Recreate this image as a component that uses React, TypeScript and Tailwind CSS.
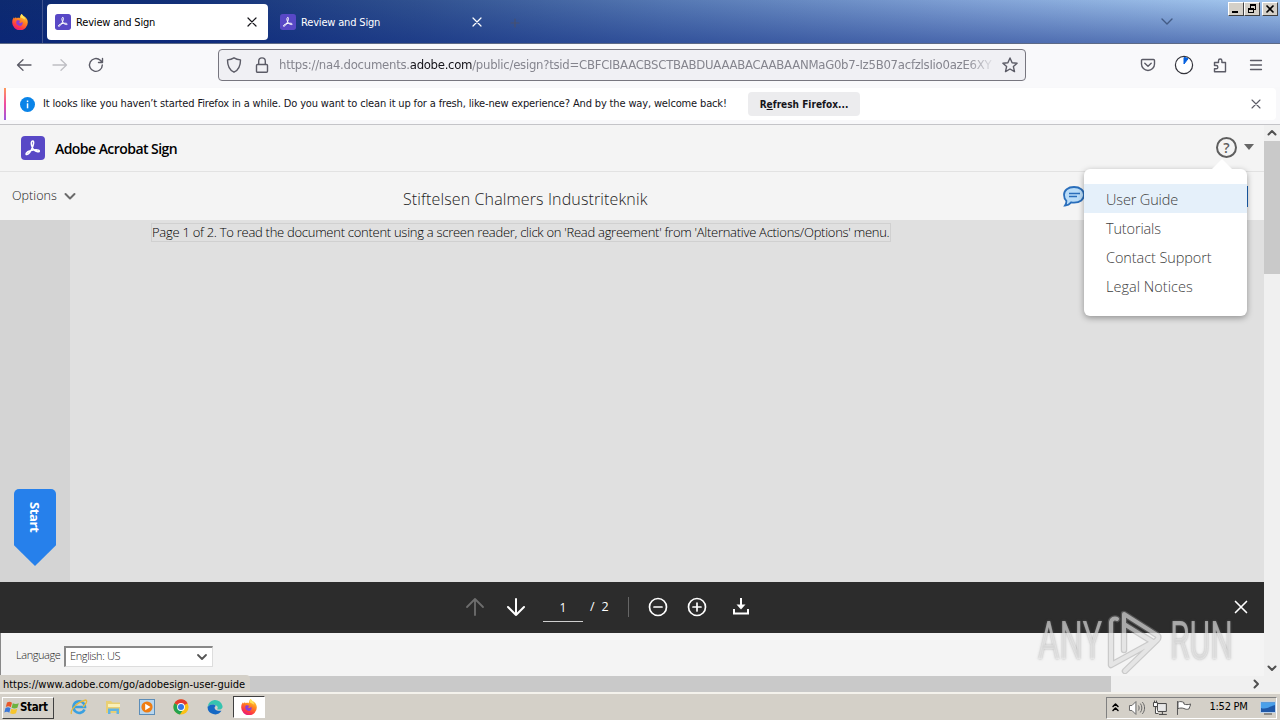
import type { ReactNode } from "react";

const UI = "font-['DejaVu_Sans_Condensed','DejaVu_Sans',sans-serif]";
const DOC = "font-['Open_Sans',sans-serif] font-light";

function AcrobatIcon({ className }: { className: string }) {
  return (
    <svg viewBox="0 0 24 24" className={className}>
      <rect width="24" height="24" rx="4" fill="#5848c6" />
      <path
        d="M11.200 5.200c1.800-.9 1.900 1.900.5 5.600-1.300 3.400-3.900 7.400-5.800 7.700-1.800.1-.8-2.500 3.300-3.700 3.900-1.300 8.700-1.400 9.100.1.300 1.700-3.200 1-5.400-1-2.300-2.300-3.500-7.600-1.700-8.700z"
        fill="none"
        stroke="#fff"
        strokeWidth="1.500"
        strokeLinejoin="round"
      />
    </svg>
  );
}

function FirefoxIcon({ className }: { className: string }) {
  return (
    <svg viewBox="0 0 16 16" className={className}>
      <defs>
        <linearGradient id="fx" x1="0.8" y1="0" x2="0.3" y2="1">
          <stop offset="0" stopColor="#ffe14a" />
          <stop offset="0.4" stopColor="#ff8a1e" />
          <stop offset="0.75" stopColor="#ff3d3f" />
          <stop offset="1" stopColor="#e31587" />
        </linearGradient>
      </defs>
      <path d="M9.600 0c1 1.200 1.600 2 2 2.600l1-.1c1.900 1.400 3.300 3.600 3.200 6A7.800 7.800 0 0 1 .2 8.500C.2 6 1 4.300 2 3.300l.4 1.200C3 3.700 3.500 3.400 4 3.200l.6 1.100C6 3.600 7 3.800 7.800 4.200 7.900 2.500 8.600 1 9.600 0z" fill="url(#fx)" />
      <path d="M5 6.300c1.500-.3 2 .5 3.400.5-.1.900-1.400 1-1.600 1.800 1 .8 2.700.1 3.500-.9.900 2.300-.4 4.300-2.500 4.300-2.200 0-3.900-1.800-3.600-3.900.1-.8.400-1.400.8-1.800z" fill="#8a3fd6" />
      <path d="M9.600 0c1 1.200 3.400 3 3.500 5.500-1-.8-4-1.500-4.600-2.500C8.600 1.700 9 .8 9.600 0z" fill="#ffe45a" />
    </svg>
  );
}

function Stroke({ d, className, width = 1.3, box = 16, fill = "none" }: { d: string; className: string; width?: number; box?: number; fill?: string }) {
  return (
    <svg viewBox={`0 0 ${box} ${box}`} className={`shrink-0 ${className}`} fill={fill} stroke="currentColor" strokeWidth={width} strokeLinecap="round" strokeLinejoin="round">
      <path d={d} />
    </svg>
  );
}

const CROSS = "M4 4l8 8M12 4l-8 8";

function WinButton({ children }: { children: ReactNode }) {
  return (
    <div className="flex h-[14px] w-4 items-center justify-center border border-t-white border-r-[#404040] border-b-[#404040] border-l-white bg-[#d4d0c8]">
      {children}
    </div>
  );
}

function TabStrip() {
  return (
    <div className="flex h-11 shrink-0 items-start border-b border-[#5d6a86] bg-[linear-gradient(to_bottom,transparent,rgba(8,35,125,0.45)),linear-gradient(to_right,#0d2a70_0%,#123078_14%,#2f508f_32%,#5578b3_52%,#7fa0d4_75%,#a6caf0_100%)]">
      <div className="flex h-[43px] w-[43px] items-center justify-center border-r border-[#40548f]">
        <FirefoxIcon className="mr-[3px] h-4 w-4" />
      </div>
      <div className="mt-1 ml-1 flex h-9 w-[221px] items-center rounded bg-white pl-2">
        <AcrobatIcon className="h-4 w-4" />
        <span className="mt-[3px] ml-[5px] flex-1 text-[11px] tracking-[-0.17px] text-black">Review and Sign</span>
        <Stroke d={CROSS} className="mr-2 h-4 w-4 text-[#15141a]" width={1.2} />
      </div>
      <div className="mt-1 flex h-9 w-[221px] items-center pl-3">
        <AcrobatIcon className="h-4 w-4" />
        <span className="mt-[3px] ml-[5px] flex-1 text-[11px] tracking-[-0.17px] text-white">Review and Sign</span>
        <Stroke d={CROSS} className="mr-1 h-4 w-4 text-white" width={1.2} />
      </div>
      <Stroke d="M8 4v8M4 8h8" className="mt-[15px] ml-[18px] h-4 w-4 text-[#475070]" width={1.2} />
      <div className="flex-1" />
      <Stroke d="M3 6l5 5 5-5" className="mt-[13px] mr-[53px] h-4 w-4 text-[#435b85]" width={1.4} />
      <div className="mt-[2px] mr-[2px] flex">
        <WinButton>
          <div className="mt-[6px] mr-[2px] h-[2px] w-[6px] bg-black" />
        </WinButton>
        <WinButton>
          <svg viewBox="0 0 10 10" className="h-[10px] w-[10px]" fill="none" stroke="#000" shapeRendering="crispEdges">
            <path d="M3.500 3.500v-3h5v5h-2M3 1.500h6M1.500 4.500h5v4h-5zM1 5.500h6" />
          </svg>
        </WinButton>
        <div className="w-[2px]" />
        <WinButton>
          <svg viewBox="0 0 10 10" className="h-[10px] w-[10px]" stroke="#000" strokeWidth="1.600">
            <path d="M1.500 1.500l7 7M8.500 1.500l-7 7" />
          </svg>
        </WinButton>
      </div>
    </div>
  );
}

function NavBar() {
  return (
    <div className="flex h-[43px] shrink-0 items-center bg-[#f9f9fb] pb-[2px] text-[#5b5b66]">
      <Stroke d="M15 8H1.500M7 2.800L1.500 8 7 13.200" className="ml-4 h-4 w-4" />
      <Stroke d="M1 8h13.500M9 2.800L14.500 8 9 13.200" className="ml-5 h-4 w-4 text-[#bfbfc4]" />
      <Stroke d="M14.300 8a6.400 6.400 0 1 1-2-4.700l2 2M14.500 1.500v4h-4" className="ml-5 h-4 w-4" width={1.4} />
      <div className="ml-[114px] flex h-8 w-[808px] items-center rounded border border-[#77767f] bg-[#f0f0f4]">
        <Stroke d="M8 .8c2 1.300 4 1.900 6.500 2.100 0 5.500-1.600 9.900-6.500 12.300C3.100 12.800 1.500 8.400 1.500 2.900 4 2.700 6 2.100 8 .8z" className="ml-[7px] h-4 w-4" width={1.4} />
        <Stroke d="M3.500 7.500h9a1 1 0 0 1 1 1v5.700a1 1 0 0 1-1 1h-9a1 1 0 0 1-1-1V8.500a1 1 0 0 1 1-1zM4.700 7.500V4.200a3.300 3.300 0 0 1 6.600 0v3.300" className="ml-3 h-4 w-4" width={1.4} />
        <div className="ml-[9px] w-[722px] text-[13px] leading-5 tracking-[-0.26px] whitespace-nowrap text-[#85858e] [mask-image:linear-gradient(to_right,#000_95%,transparent_99.5%)]">
          https://na4.documents.<span className="tracking-[-0.3px] text-[#15141a]">adobe.com</span>/public/esign?tsid=CBFCIBAACBSCTBABDUAAABACAABAANMaG0b7-Iz5B07acfzlsIio0azE6XY
        </div>
        <Stroke d="M8 1l2.100 4.700 5 .5-3.700 3.400 1.100 5L8 12l-4.500 2.600 1.100-5L.9 6.200l5-.5z" className="ml-px h-4 w-4" width={1.4} />
      </div>
      <Stroke d="M2.500 2.500h11a1 1 0 0 1 1 1V7a6.500 6.500 0 0 1-13 0V3.500a1 1 0 0 1 1-1zM4.800 6.300L8 9.300l3.200-3" className="ml-[114px] h-4 w-4" width={1.4} />
      <svg viewBox="0 0 20 20" className="ml-[18px] h-5 w-5">
        <circle cx="10" cy="10" r="8.600" fill="#fff" stroke="#33333b" strokeWidth="1.200" />
        <path d="M10 9V2.500a7 7 0 0 1 4 1.300z" fill="#0560df" stroke="#0560df" />
      </svg>
      <Stroke d="M2.500 5.500h4V3.700a1.700 1.700 0 0 1 3.400 0v1.800h3.600v9.300h-11v-3h1.700a1.600 1.600 0 0 0 0-3.300H2.500z" className="ml-[18px] h-4 w-4" width={1.4} />
      <Stroke d="M2.500 3.500h11M2.500 8h11M2.500 12.500h11" className="ml-5 h-4 w-4" width={1.3} />
    </div>
  );
}

function InfoBar() {
  return (
    <div className="h-[38px] shrink-0 border-b border-[#c4c4c8] bg-[#f8f8fa] pt-px">
      <div className="mr-1 ml-1 flex h-8 items-center rounded-r bg-white">
        <div className="h-8 w-[2px] bg-[linear-gradient(to_bottom,#ff9a5a,#f04aa0_50%,#9a58e0)]" />
        <div className="ml-[14px] flex h-[15px] w-[15px] items-center justify-center rounded-full bg-[#0a84e8]">
          <svg viewBox="0 0 15 15" className="h-[15px] w-[15px]" fill="#fff">
            <rect x="6.800" y="3.500" width="1.500" height="1.600" />
            <rect x="6.800" y="6.300" width="1.500" height="5" />
          </svg>
        </div>
        <span className="ml-2 w-[705px] text-[11px] tracking-[-0.15px] whitespace-nowrap text-[#15141a]">
          It looks like you haven’t started Firefox in a while. Do you want to clean it up for a fresh, like-new experience? And by the way, welcome back!
        </span>
        <div className="flex h-6 w-28 items-center justify-center rounded bg-[#ececee] pt-px text-[10px] font-bold tracking-[0.02px] whitespace-nowrap text-[#15141a]">
          R<span className="underline">e</span>fresh Firefox...
        </div>
        <div className="flex-1" />
        <Stroke d={CROSS} className="mr-3 h-4 w-4 text-[#5b5b66]" width={1.1} />
      </div>
    </div>
  );
}

function HelpMenu() {
  return (
    <div className="absolute top-[44px] left-[1084px] z-10 h-[147px] w-[163px] rounded-md bg-white pt-[15px] shadow-[0_2px_6px_rgba(0,0,0,0.35)]">
      <svg viewBox="0 0 22 11" className="absolute -top-[10px] left-[127px] h-[11px] w-[22px]" fill="#fff">
        <path d="M0 11L11 0l11 11z" />
      </svg>
      {["User Guide", "Tutorials", "Contact Support", "Legal Notices"].map((item, i) => (
        <div key={item} className={`flex h-[29px] items-center pt-[2px] pl-[22px] text-[14.5px] text-[#3e3e3e] ${i === 0 ? "bg-[#e5f0fa]" : ""}`}>
          <span className={i === 0 || i === 1 ? "tracking-[-0.15px]" : i === 2 ? "tracking-[-0.08px]" : "tracking-[0.03px]"}>{item}</span>
        </div>
      ))}
    </div>
  );
}

function AgreementPage() {
  return (
    <div className={`relative flex h-[551px] w-[1264px] shrink-0 flex-col bg-[#f4f4f4] ${DOC}`}>
      <div className="flex h-[47px] shrink-0 items-center border-b border-[#e2e2e2] pl-[21px]">
        <AcrobatIcon className="mt-px mb-[2px] h-6 w-6" />
        <span className="ml-[10px] text-[14px] font-semibold tracking-[-0.55px] text-black">Adobe Acrobat Sign</span>
        <div className="flex-1" />
        <div className="mb-[2px] flex h-[21px] w-[21px] items-center justify-center rounded-full border-2 border-[#5e5e5e] text-[14px] font-semibold text-[#5e5e5e]">?</div>
        <svg viewBox="0 0 10 6" className="mr-[10px] mb-[2px] ml-[7px] h-[6px] w-[10px]" fill="#666">
          <path d="M0 0h10L5 6z" />
        </svg>
      </div>
      <div className="flex h-12 shrink-0 items-center pl-3">
        <span className="w-[45px] text-[12.5px] tracking-[0.05px] whitespace-nowrap text-[#222]">Options</span>
        <Stroke d="M3.500 6l4.500 4.500L12.500 6" className="ml-[5px] h-4 w-4 text-[#6a6a6a]" width={2} />
        <span className="mt-[6px] ml-[325px] w-[246px] text-[16px] tracking-[0.13px] whitespace-nowrap text-[#222]">Stiftelsen Chalmers Industriteknik</span>
        <svg viewBox="0 0 24 22" className="ml-[413px] h-[22px] w-6" fill="#b9dcf8" stroke="#2a6ebb" strokeWidth="1.800">
          <path d="M12 2c6 0 10 3.200 10 7.800s-4 7.800-10 7.800c-1 0-1.900-.1-2.800-.3C7.500 19.500 5.500 20.500 3 20.500c1-1.300 1.500-2.800 1.400-4.600C2.800 14.400 2 12.300 2 9.800 2 5.200 6 2 12 2z" />
          <path d="M7 8.500h11M7 11.500h8" strokeWidth="1.300" />
        </svg>
        <div className="flex-1" />
        <div className="mr-4 h-[21px] w-24 bg-[#1a62b5]" />
      </div>
      <div className="flex h-[362px] shrink-0 bg-[#e0e0e0]">
        <div className="flex w-[70px] items-end bg-[#d4d4d4] pb-4 pl-[14px]">
          <div className="flex h-[77px] w-[42px] justify-center rounded-t-[5px] bg-[#2680eb] pt-[13px] [clip-path:polygon(0_0,100%_0,100%_73%,50%_100%,0_73%)]">
            <span className="h-[31px] text-[13px] leading-[42px] font-bold tracking-[-0.4px] text-white [writing-mode:vertical-rl]">Start</span>
          </div>
        </div>
        <div className="mt-[3px] ml-[81px] flex h-[19px] w-[740px] items-center border border-[#d0d0d0] bg-[#e0e0e0] text-[13px] leading-[17px] tracking-[-0.275px] whitespace-nowrap text-black">
          Page 1 of 2. To read the document content using a screen reader, click on 'Read agreement' from 'Alternative Actions/Options' menu.
        </div>
      </div>
      <div className="flex h-[51px] shrink-0 items-center bg-[#2c2c2c] text-[12.5px] font-normal text-white">
        <Stroke d="M10 18V2M2 10l8-8 8 8" box={20} className="mb-px ml-[465px] h-5 w-5 text-[#6e6e6e]" width={1.8} />
        <Stroke d="M10 2v16M2 10l8 8 8-8" box={20} className="mb-px ml-[21px] h-5 w-5" width={2} />
        <div className="mt-px ml-[17px] flex h-7 w-10 items-center justify-center border-b border-[#cfcfcf] text-[12px]">1</div>
        <span className="ml-[7px]">/</span>
        <span className="ml-[7px] w-2">2</span>
        <div className="mb-[2px] ml-[18px] h-5 w-px bg-[#666]" />
        <Stroke d="M10 1.500a8.500 8.500 0 1 0 0 17 8.500 8.500 0 0 0 0-17M6 10h8" box={20} className="mb-[2px] ml-[19px] h-5 w-5" width={1.7} />
        <Stroke d="M10 1.500a8.500 8.500 0 1 0 0 17 8.500 8.500 0 0 0 0-17M6 10h8M10 6v8" box={20} className="mb-[2px] ml-[19px] h-5 w-5" width={1.7} />
        <svg viewBox="0 0 18 18" className="mb-[3px] ml-[25px] h-[18px] w-[18px]" fill="none" stroke="#fff" strokeWidth="2">
          <path d="M9 1v8M2 12v4.500h14V12" />
          <path d="M4.500 7.500h9L9 12.500z" fill="#fff" stroke="none" />
        </svg>
        <div className="flex-1" />
        <Stroke d={CROSS} className="mr-[12px] mb-[2px] h-[22px] w-[22px]" width={1.2} />
      </div>
      <div className="flex h-[43px] shrink-0 items-center border-l border-[#888] pt-[3px] pl-[15px] text-[#222]">
        <span className="mb-[2px] w-12 text-[11px] tracking-[-0.42px] whitespace-nowrap">Language</span>
        <div className="flex h-[21px] w-[149px] items-center border border-t-2 border-l-2 border-t-[#888] border-r-[#ddd] border-b-[#ddd] border-l-[#888] bg-white pr-[2px] pl-1 text-[11px]">
          <span className="flex-1 tracking-[-0.38px]">English: US</span>
          <Stroke d="M4 6l4 4 4-4" className="h-4 w-4 text-[#555]" width={1.8} />
        </div>
      </div>
      <HelpMenu />
    </div>
  );
}

function Watermark() {
  const mark = "M20 42V6l33 21a3 3 0 0 1 0 5L21 63M20 16l29 18L7 57V14a4 4 0 0 1 6-3";
  return (
    <div className="absolute top-[607px] left-[1038px] flex h-[68px] items-center font-['Roboto',sans-serif] text-[53px] leading-[68px] text-white/50 [text-shadow:0_0_3px_rgba(120,120,120,0.6)]">
      <div className="w-[66px]">
        <div className="w-[108px] origin-left scale-x-[0.62]">ANY</div>
      </div>
      <svg viewBox="0 0 60 66" className="h-[66px] w-[60px]" fill="none" strokeLinejoin="round" strokeLinecap="round">
        <path d={mark} stroke="rgba(140,140,140,0.4)" strokeWidth="6.500" />
        <path d={mark} stroke="rgba(255,255,255,0.5)" strokeWidth="4" />
      </svg>
      <div className="ml-[6px] w-[64px]">
        <div className="w-[106px] origin-left scale-x-[0.6]">RUN</div>
      </div>
    </div>
  );
}

function Taskbar() {
  return (
    <div className="flex h-7 shrink-0 items-center border-t-2 border-[#f4f2ec] bg-[#d4d0c8]">
      <div className="mt-[2px] ml-[2px] flex h-[22px] w-[52px] items-center border border-t-white border-r-[#404040] border-b-[#404040] border-l-white pl-px">
        <svg viewBox="0 0 16 16" className="h-4 w-4 shrink-0">
          <path d="M3 2.500c2-1 3.500-.8 5 .2L6.800 7.200c-1.500-1-3-1.200-5-.2z" fill="#e8582a" />
          <path d="M8.800 3.200c1.800 1 3.700 1 6 0l-1.400 4.500c-2 .9-4 .9-5.800 0z" fill="#6db33f" />
          <path d="M1.500 8c2-1 3.500-.8 5 .2l-1.200 4.500c-1.500-1-3-1.200-5-.2z" fill="#3b78d8" />
          <path d="M7.300 8.700c1.800 1 3.700 1 6 0L12 13.200c-2 .9-4.100.9-5.900 0z" fill="#f7c52c" />
        </svg>
        <span className="text-[11.5px] font-bold tracking-[-0.35px] text-black">Start</span>
      </div>
      <svg viewBox="0 0 18 18" className="ml-4 h-[18px] w-[18px]" fill="none">
        <path d="M14.500 11.500A5.800 5.800 0 1 1 15 9H5" stroke="#3aa0e0" strokeWidth="2.600" />
        <path d="M1.500 16C0 13 6 4 16 2c2 1-1 5-3 7" stroke="#e7b93c" strokeWidth="1.300" />
      </svg>
      <svg viewBox="0 0 18 18" className="ml-4 h-[18px] w-[18px]">
        <path d="M2 3h5l1.500 1.500H16V15H2z" fill="#e9cf74" />
        <path d="M4 6h12v3H4z" fill="#faf0b8" />
        <path d="M4 16v-5.500h11V16h-2.500v-3h-6v3z" fill="#62b4e2" />
      </svg>
      <svg viewBox="0 0 18 18" className="ml-4 h-[18px] w-[18px]">
        <rect x="1.500" y="1.500" width="15" height="15" fill="#b8d6ee" stroke="#5c8db8" />
        <circle cx="9" cy="9" r="5.600" fill="#ef7d12" />
        <path d="M7.200 5.800v6.400L12.500 9z" fill="#fff" />
      </svg>
      <svg viewBox="0 0 18 18" className="ml-4 h-[18px] w-[18px]">
        <circle cx="9" cy="9" r="7.600" fill="#fbc116" />
        <path d="M9 9L2.400 5.200a7.600 7.600 0 0 1 13.200 0z" fill="#e33b2e" />
        <path d="M2.400 5.200a7.600 7.600 0 0 0 5.500 11.300L11.500 11 9 9z" fill="#23a350" />
        <circle cx="9" cy="9" r="3.900" fill="#fff" />
        <circle cx="9" cy="9" r="3" fill="#3577e5" />
      </svg>
      <svg viewBox="0 0 18 18" className="ml-4 h-[18px] w-[18px]">
        <path d="M1.500 9a7.600 7.600 0 0 1 15-1c.5 3-2.500 4-5 3.500-1-.4.5-1 .2-2.500C10.500 6 4 5.500 1.500 9z" fill="#35c4b0" />
        <path d="M1.500 9C4 5.500 9 6 10 8c-2.500.5-2.300 5.500 5.500 4.800A7.600 7.600 0 0 1 1.500 9z" fill="#1568c4" />
      </svg>
      <div className="ml-[9px] flex h-[22px] w-8 items-center justify-center border border-t-[#404040] border-r-white border-b-white border-l-[#404040] bg-white">
        <FirefoxIcon className="h-4 w-4" />
      </div>
      <div className="flex-1" />
      <div className="mt-px mr-[3px] flex h-[22px] w-[171px] items-center border border-t-[#808080] border-r-white border-b-white border-l-[#808080]">
        <Stroke d="M6 6.500l2.500-2.500L11 6.500M6 10.500L8.500 8l2.500 2.500" className="h-4 w-4 text-black" width={1.5} />
        <svg viewBox="0 0 18 16" className="ml-[5px] h-4 w-[18px]" fill="#fff" stroke="#666">
          <path d="M1.500 5.500h2.500l4-4v13l-4-4H1.500z" />
          <path d="M10.500 5.500c1 1.500 1 3.500 0 5M12.500 3.500c2 2.500 2 6.500 0 9M14.500 2c3 3.500 3 8.500 0 12" fill="none" />
        </svg>
        <svg viewBox="0 0 16 16" className="ml-[6px] h-4 w-4" fill="#e8e8e8" stroke="#444">
          <path d="M5.500 3.500h9v8h-9zM7 14.500h8M10.500 11.500v3" />
          <path d="M1.500 2.500h4v4h-4zM2.500.5v2M4.500.5v2M3.500 6.500v7h3" fill="#fff" />
        </svg>
        <svg viewBox="0 0 16 16" className="ml-2 h-4 w-4" fill="#fff" stroke="#555">
          <path d="M1.500 1v14M2 2c2-.8 4-.6 6 .5v1.500c2 .8 4 .8 7 0-1 2-1 3-2 5-2 .6-3 .4-5-.500C6 7.800 4 7.900 2 8.700z" />
        </svg>
        <span className="ml-[18px] w-[40px] text-[11px] tracking-[-0.25px] whitespace-nowrap text-black">1:52 PM</span>
        <svg viewBox="0 0 16 14" className="ml-[11px] h-[14px] w-4 shrink-0">
          <rect x=".5" y="1" width="15" height="10.500" fill="#1f58a8" stroke="#b9d0ea" />
          <path d="M1 7c5 2 10-2 14-3v-2.500H1z" fill="#4aa0ea" />
          <path d="M4 13h8" stroke="#444" />
        </svg>
      </div>
    </div>
  );
}

export default function App() {
  return (
    <div className={`relative flex h-[720px] w-[1280px] flex-col overflow-hidden bg-[#f9f9fb] ${UI}`}>
      <TabStrip />
      <NavBar />
      <InfoBar />
      <div className="flex h-[551px] shrink-0">
        <AgreementPage />
        <div className="flex w-4 flex-col items-center bg-[#f0f0f0]">
          <Stroke d="M4.500 9.500L8 6l3.500 3.500" className="h-4 w-4 text-[#505050]" width={2} />
          <div className="h-[133px] w-4 bg-[#c9c9c9]" />
          <div className="flex-1" />
          <Stroke d="M4.500 6.500L8 10l3.500-3.500" className="h-4 w-4 text-[#505050]" width={2} />
        </div>
      </div>
      <div className="flex h-4 shrink-0 bg-[#f0f0f0]">
        <div className="h-4 w-[1111px] bg-[#c9c9c9]" />
        <div className="flex-1" />
        <Stroke d="M6.500 4.500L10 8l-3.500 3.500" className="mr-4 h-4 w-4 text-[#505050]" width={2} />
      </div>
      <Taskbar />
      <div className="absolute top-[675px] left-0 flex h-[17px] w-[250px] items-center rounded-tr-sm bg-[#d4d0c8] pt-[3px] pl-[3px] text-[11px] tracking-[-0.02px] whitespace-nowrap text-black">
        https://www.adobe.com/go/adobesign-user-guide
      </div>
      <Watermark />
    </div>
  );
}
